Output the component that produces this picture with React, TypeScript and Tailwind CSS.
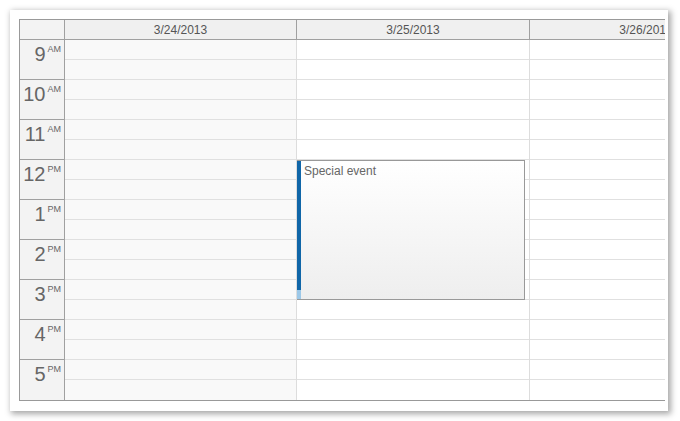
import React from "react";

const days = [
  { label: "3/24/2013", width: "w-[232px]", bg: "bg-[#f9f9f9]" },
  { label: "3/25/2013", width: "w-[233px]", bg: "bg-white" },
  { label: "3/26/2013", width: "w-[233px]", bg: "bg-white" },
];

const hours = [
  { h: "9", ap: "AM" },
  { h: "10", ap: "AM" },
  { h: "11", ap: "AM" },
  { h: "12", ap: "PM" },
  { h: "1", ap: "PM" },
  { h: "2", ap: "PM" },
  { h: "3", ap: "PM" },
  { h: "4", ap: "PM" },
  { h: "5", ap: "PM" },
];

const slots = Array.from({ length: 18 }, (_, i) => i);

function Event() {
  return (
    <div className="absolute left-0 top-[120px] flex h-[140px] w-[228px] border border-l-0 border-[#999] bg-gradient-to-b from-white to-[#eeeeee]">
      <div className="flex w-[4px] flex-col">
        <div className="flex-1 bg-[#1066a8]" />
        <div className="h-[9px] bg-[#9cc8e8]" />
      </div>
      <div className="px-[3px] pt-[2px] text-[12px] leading-[16px] text-[#666]">Special event</div>
    </div>
  );
}

export default function App() {
  return (
    <div className="h-[421px] w-[680px] bg-white pl-[10px] pt-[10px] font-['Liberation_Sans',Arial,sans-serif]">
      <div className="h-[401px] w-[658px] bg-white pl-[9px] pt-[9px] shadow-[2px_2px_6px_1px_rgba(0,0,0,0.35)]">
        <div className="flex w-[646px] overflow-hidden border-l border-t border-b border-[#999]">
          {/* row header */}
          <div className="flex w-[45px] shrink-0 flex-col border-r border-[#a0a0a0] bg-[#f3f3f3]">
            <div className="h-[20px] border-b border-[#a0a0a0]" />
            {hours.map((x, i) => (
              <div
                key={x.h}
                className={`flex h-[40px] justify-end pr-[3px] pt-[4px] text-[#666] ${
                  i < hours.length - 1 ? "border-b border-[#a0a0a0]" : ""
                }`}
              >
                <span className="text-[20px] leading-none">{x.h}</span>
                <span className="ml-[2px] pt-[1px] text-[9px] leading-none">{x.ap}</span>
              </div>
            ))}
          </div>
          {/* day columns */}
          {days.map((d, di) => (
            <div key={d.label} className={`flex ${d.width} shrink-0 flex-col border-r border-[#ddd]`}>
              <div className="-mr-px flex h-[20px] items-center justify-center border-b border-r border-[#a0a0a0] bg-[#f0f0f0] text-[12px] text-[#555] whitespace-nowrap">
                {d.label}
              </div>
              <div className={`relative flex flex-col ${d.bg}`}>
                {slots.map((s) => (
                  <div
                    key={s}
                    className={`h-[20px] ${s < slots.length - 1 ? "border-b border-[#e0e0e0]" : ""}`}
                  />
                ))}
                {di === 1 && <Event />}
              </div>
            </div>
          ))}
        </div>
      </div>
    </div>
  );
}
